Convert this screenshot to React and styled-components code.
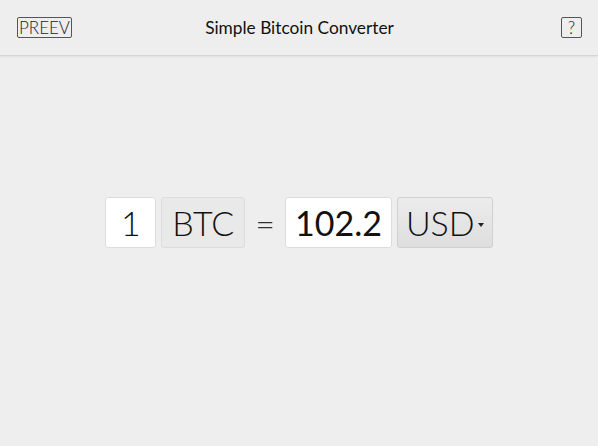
import React from "react"
import styled, { createGlobalStyle } from "styled-components"

const GlobalStyle = createGlobalStyle`
  html, body {
    margin: 0;
    padding: 0;
    background: #eeeeee;
    font-family: Lato, "Open Sans", sans-serif;
    color: #111;
  }
`

const Header = styled.header`
  display: grid;
  grid-template-columns: 1fr auto 1fr;
  align-items: center;
  height: 56px;
  padding: 0 16px 0 17px;
  border-bottom: 1px solid #d6d6d6;
  box-shadow: 0 1px 2px rgba(0, 0, 0, 0.06);
  box-sizing: border-box;
`

const Badge = styled.button`
  justify-self: ${({ end }) => (end ? "end" : "start")};
  font-family: inherit;
  font-size: 17px;
  font-weight: 300;
  line-height: 19px;
  color: #222;
  background: transparent;
  border: 1px solid #555;
  border-radius: 2px;
  padding: 0 ${({ wide }) => (wide ? "1px" : "6px")};
  cursor: pointer;
`

const Title = styled.h1`
  margin: 0;
  font-size: 17.3px;
  font-weight: 400;
  color: #111;
`

const Main = styled.main`
  display: flex;
  justify-content: center;
  padding-top: 141px;
`

const Converter = styled.div`
  display: flex;
  align-items: center;
  gap: 5px;
  font-size: 34px;
  font-weight: 300;
`

const Field = styled.div`
  height: 51px;
  box-sizing: border-box;
  display: flex;
  align-items: center;
  justify-content: center;
  padding: 0 ${({ pad }) => pad || 0}px;
  min-width: ${({ min }) => min || 0}px;
  border: 1px solid ${({ kind }) => (kind === "select" ? "#d0d0d0" : "#dcdcdc")};
  border-radius: 3px;
  background: ${({ kind }) =>
    kind === "white"
      ? "#ffffff"
      : kind === "select"
      ? "linear-gradient(#ececec, #dedede)"
      : "#e9e9e9"};
  font-weight: ${({ strong }) => (strong ? 400 : 300)};
  color: #111;
`

const Equals = styled.span`
  padding: 0 5px;
  font-weight: 300;
  color: #333;
`

const Caret = styled.span`
  display: inline-block;
  width: 0;
  height: 0;
  margin-left: 3px;
  margin-top: 4px;
  border-left: 3px solid transparent;
  border-right: 3px solid transparent;
  border-top: 4px solid #222;
`

export default function App() {
  return (
    <>
      <GlobalStyle />
      <Header>
        <Badge wide>PREEV</Badge>
        <Title>Simple Bitcoin Converter</Title>
        <Badge end>?</Badge>
      </Header>
      <Main>
        <Converter>
          <Field kind="white" min={51}>1</Field>
          <Field pad={10}>BTC</Field>
          <Equals>=</Equals>
          <Field kind="white" pad={9} strong>102.2</Field>
          <Field kind="select" pad={8}>
            USD<Caret />
          </Field>
        </Converter>
      </Main>
    </>
  )
}
